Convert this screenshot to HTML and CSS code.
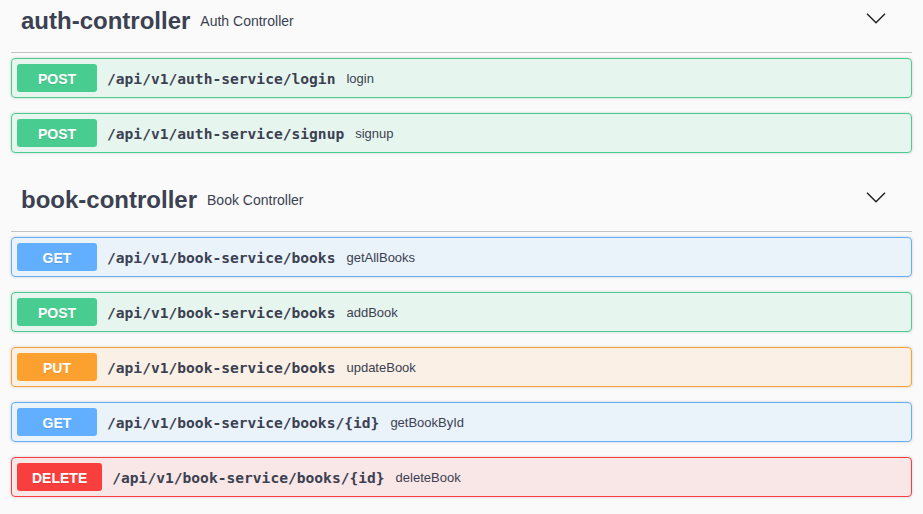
FILE: index.html
```html
<!DOCTYPE html>
<html lang="en">
<head>
<meta charset="utf-8">
<title>Swagger UI</title>
<link rel="stylesheet" href="styles.css">
</head>
<body>
<div class="wrapper">
  <section class="tag-section">
    <h3 class="opblock-tag">
      <span class="tag-name">auth-controller</span>
      <small class="tag-desc">Auth Controller</small>
      <svg class="arrow" width="20" height="20" viewBox="0 0 20 20" aria-hidden="true"><polyline points="1,2.8 10,11.8 19,2.8" fill="none" stroke="#222" stroke-width="1.5"/></svg>
    </h3>
    <div class="opblock post">
      <span class="method">POST</span>
      <span class="path">/api/v1/auth-service/login</span>
      <span class="desc">login</span>
    </div>
    <div class="opblock post">
      <span class="method">POST</span>
      <span class="path">/api/v1/auth-service/signup</span>
      <span class="desc">signup</span>
    </div>
  </section>
  <section class="tag-section">
    <h3 class="opblock-tag">
      <span class="tag-name">book-controller</span>
      <small class="tag-desc">Book Controller</small>
      <svg class="arrow" width="20" height="20" viewBox="0 0 20 20" aria-hidden="true"><polyline points="1,2.8 10,11.8 19,2.8" fill="none" stroke="#222" stroke-width="1.5"/></svg>
    </h3>
    <div class="opblock get">
      <span class="method">GET</span>
      <span class="path">/api/v1/book-service/books</span>
      <span class="desc">getAllBooks</span>
    </div>
    <div class="opblock post">
      <span class="method">POST</span>
      <span class="path">/api/v1/book-service/books</span>
      <span class="desc">addBook</span>
    </div>
    <div class="opblock put">
      <span class="method">PUT</span>
      <span class="path">/api/v1/book-service/books</span>
      <span class="desc">updateBook</span>
    </div>
    <div class="opblock get">
      <span class="method">GET</span>
      <span class="path">/api/v1/book-service/books/{id}</span>
      <span class="desc">getBookById</span>
    </div>
    <div class="opblock delete">
      <span class="method">DELETE</span>
      <span class="path">/api/v1/book-service/books/{id}</span>
      <span class="desc">deleteBook</span>
    </div>
  </section>
</div>
</body>
</html>
```

FILE: styles.css
```css
html, body {
  margin: 0;
  padding: 0;
  background: #fafafa;
  overflow: hidden;
}

body {
  font-family: "Liberation Sans", Arial, sans-serif;
  color: #3b4151;
}

.wrapper {
  margin-top: -11px;
  padding: 0 11px;
}

.tag-section {
  display: flex;
  flex-direction: column;
}

.opblock-tag {
  display: flex;
  align-items: center;
  box-sizing: border-box;
  height: 64px;
  margin: 0 0 5px;
  padding: 0 20px 0 10px;
  border-bottom: 1px solid rgba(59, 65, 81, 0.3);
  font-family: "Liberation Sans", Arial, sans-serif;
  color: #3b4151;
}

.tag-name {
  font-size: 24px;
  font-weight: 700;
  line-height: 1;
}

.tag-desc {
  flex: 1 1 auto;
  padding: 0 10px;
  font-size: 14px;
  font-weight: 400;
  line-height: 1;
}

.arrow {
  display: block;
  margin-right: 6px;
  flex: none;
}

.opblock {
  display: flex;
  align-items: center;
  box-sizing: border-box;
  height: 40px;
  margin: 0 0 15px;
  padding: 5px;
  border: 1px solid #000;
  border-radius: 4px;
  box-shadow: 0 0 3px rgba(0, 0, 0, 0.19);
}

.method {
  box-sizing: border-box;
  min-width: 80px;
  padding: 7px 15px 5px;
  border-radius: 3px;
  font-family: "Liberation Sans", Arial, sans-serif;
  font-size: 14px;
  font-weight: 700;
  line-height: 16px;
  text-align: center;
  color: #fff;
  text-shadow: 0 1px 0 rgba(0, 0, 0, 0.1);
}

.path {
  padding: 0 10px;
  font-family: "DejaVu Sans Mono", "Liberation Mono", monospace;
  font-size: 14.6px;
  font-weight: 700;
  color: #3b4151;
  white-space: nowrap;
}

.desc {
  flex: 1 1 auto;
  font-size: 13px;
  color: #3b4151;
  padding-left: 1px;
}

.post { background: rgba(73, 204, 144, 0.1); border-color: #49cc90; }
.post .method { background: #49cc90; }

.get { background: rgba(97, 175, 254, 0.1); border-color: #61affe; }
.get .method { background: #61affe; }

.put { background: rgba(252, 161, 48, 0.1); border-color: #fca130; }
.put .method { background: #fca130; }

.delete { background: rgba(249, 62, 62, 0.1); border-color: #f93e3e; }
.delete .method { background: #f93e3e; }
```
